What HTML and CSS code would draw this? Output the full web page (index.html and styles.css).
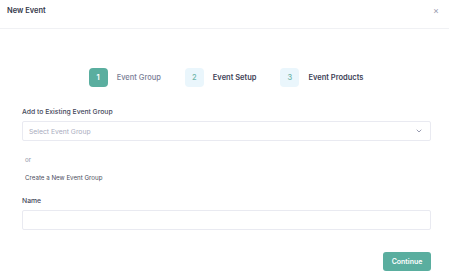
FILE: index.html
```html
<!DOCTYPE html>
<html lang="en">
<head>
    <meta charset="UTF-8">
    <meta name="viewport" content="width=device-width, initial-scale=1.0">
    <title>New Event</title>
    <link rel="stylesheet" href="styles.css">
</head>
<body>
    <header class="modal-header">
        <h1 class="modal-title">New Event</h1>
        <span class="close-btn">&times;</span>
    </header>

    <div class="steps">
        <div class="step active">
            <span class="step-num">1</span>
            <span class="step-label">Event Group</span>
        </div>
        <div class="step">
            <span class="step-num">2</span>
            <span class="step-label">Event Setup</span>
        </div>
        <div class="step">
            <span class="step-num">3</span>
            <span class="step-label">Event Products</span>
        </div>
    </div>

    <form class="event-form">
        <label class="field-label">Add to Existing Event Group</label>
        <div class="select-box">
            <span class="placeholder">Select Event Group</span>
            <svg class="chevron" width="6" height="4" viewBox="0 0 6 4"><path d="M0.7 0.7l2.3 2.3 2.3-2.3" fill="none" stroke="#9a9db2" stroke-width="1"/></svg>
        </div>
        <p class="or">or</p>
        <p class="create-link">Create a New Event Group</p>
        <label class="field-label">Name</label>
        <input type="text" class="text-input">
        <div class="actions">
            <button type="button" class="btn-primary">Continue</button>
        </div>
    </form>
</body>
</html>
```

FILE: styles.css
```css
body {
    font-family: Inter, "Noto Sans", sans-serif;
    margin: 0;
    background: #ffffff;
    color: #3a3d4f;
}
.modal-header {
    display: flex;
    align-items: center;
    justify-content: space-between;
    height: 20px;
    padding: 0 10px 8px 7px;
    border-bottom: 1px solid #f0f1f4;
}
.modal-title {
    margin: 0;
    font-size: 7.5px;
    font-weight: 600;
    color: #35384a;
}
.close-btn {
    font-size: 9px;
    color: #9a9db0;
    line-height: 1;
}
.steps {
    display: flex;
    justify-content: center;
    gap: 24px;
    margin-top: 39px;
    padding-left: 3px;
}
.step {
    display: flex;
    align-items: center;
    gap: 9px;
}
.step-num {
    width: 19px;
    height: 19px;
    border-radius: 4px;
    background: #eaf6fc;
    color: #6fb5a9;
    font-size: 7.5px;
    font-weight: 500;
    display: flex;
    align-items: center;
    justify-content: center;
}
.step.active .step-num {
    background: #5aae9f;
    color: #ffffff;
    font-weight: 600;
}
.step-label {
    font-size: 7.5px;
    font-weight: 600;
    color: #3d4156;
}
.step.active .step-label {
    font-weight: 500;
    color: #7a7e96;
}
.event-form {
    padding: 0 18px 0 22px;
    margin-top: 21px;
}
.field-label {
    display: block;
    font-size: 6.8px;
    line-height: 8px;
    font-weight: 500;
    color: #44475a;
    margin-bottom: 5px;
}
.select-box {
    height: 18px;
    border: 1px solid #e9eaf1;
    border-radius: 2px;
    display: flex;
    align-items: center;
    justify-content: space-between;
    padding: 0 8px 0 6px;
}
.placeholder {
    font-size: 6.8px;
    color: #a9acbe;
}
.or {
    font-size: 6.2px;
    line-height: 8px;
    color: #8e91a3;
    margin: 15px 0 0 3px;
}
.create-link {
    font-size: 6.2px;
    line-height: 8px;
    color: #4b4e60;
    margin: 10px 0 0 3px;
}
.create-link + .field-label {
    margin-top: 15px;
}
.text-input {
    display: block;
    box-sizing: border-box;
    width: 100%;
    height: 20px;
    border: 1px solid #e9eaf1;
    border-radius: 2px;
    margin: 0;
}
.actions {
    display: flex;
    justify-content: flex-end;
    margin-top: 22px;
}
.btn-primary {
    width: 48px;
    height: 19px;
    border: none;
    border-radius: 3px;
    background: #5aae9f;
    color: #ffffff;
    font-family: Inter, sans-serif;
    font-size: 7px;
    font-weight: 600;
    cursor: pointer;
}
```
